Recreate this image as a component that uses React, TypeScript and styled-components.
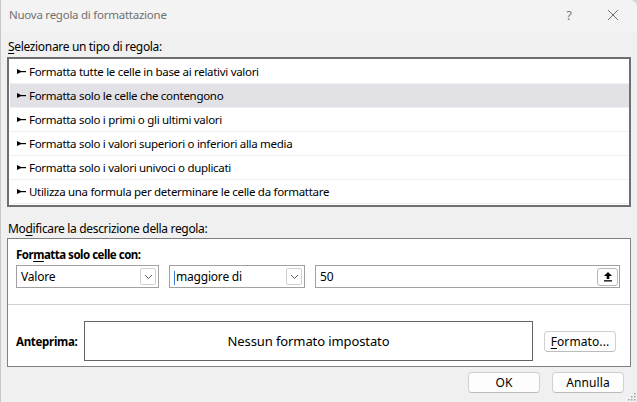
import styled, { createGlobalStyle } from 'styled-components';

const Global = createGlobalStyle`
	html, body {
		margin: 0;
		padding: 0;
		background: #d9d9d9;
	}
	body {
		font-family: 'Noto Sans', 'Open Sans', sans-serif;
		font-size: 12px;
		color: #000;
	}
`;

const Window = styled.div`
	width: 637px;
	height: 402px;
	box-sizing: border-box;
	background: #f0f0f0;
	border-left: 1px solid #c8c8c8;
	border-top-right-radius: 8px;
	display: flex;
	flex-direction: column;
	overflow: hidden;
`;

const TitleBar = styled.div`
	height: 32px;
	flex: none;
	box-sizing: border-box;
	background: #f3f3f3;
	display: flex;
	align-items: center;
	padding: 0 14px 3px 8px;
`;

const Title = styled.div`
	flex: 1;
	color: #707070;
	font-size: 11.5px;
	letter-spacing: -0.25px;
`;

const TitleButton = styled.div<{ $w: number }>`
	width: ${(p) => p.$w}px;
	text-align: center;
	color: #7a7a7a;
	font-size: 13px;
	display: flex;
	justify-content: center;
`;

const Body = styled.div`
	flex: 1;
	padding: 0 6px 0 6px;
	display: flex;
	flex-direction: column;
`;

const Label = styled.div<{ $top: number }>`
	margin-top: ${(p) => p.$top}px;
	height: 16px;
	line-height: 16px;
	padding-left: 1px;
	font-size: 12px;
	letter-spacing: -0.33px;
`;

const U = styled.span`
	text-decoration: underline;
	text-underline-offset: 2px;
`;

const List = styled.div`
	margin-top: 2px;
	height: 150px;
	box-sizing: border-box;
	border: 2px solid #6e6e73;
	background: #fff;
	padding-top: 1px;
	display: flex;
	flex-direction: column;
	overflow: hidden;
`;

const Row = styled.div<{ $selected?: boolean }>`
	height: 24px;
	flex: none;
	box-sizing: border-box;
	display: flex;
	align-items: center;
	gap: 3px;
	padding-left: 7px;
	margin-left: 1px;
	background: ${(p) => (p.$selected ? '#e1e1e6' : '#fff')};
	border-bottom: 1px solid #f0f0f0;
	font-size: 11.5px;
	letter-spacing: -0.3px;
`;

const Panel = styled.div`
	margin-top: 1px;
	height: 129px;
	box-sizing: border-box;
	border: 1px solid #808080;
	background: #fff;
	display: flex;
	flex-direction: column;
`;

const CondSection = styled.div`
	height: 66px;
	flex: none;
	box-sizing: border-box;
	border-bottom: 1px solid #d2d2d2;
	padding: 8px 10px 0 8px;
`;

const Bold = styled.div`
	font-weight: 700;
	font-size: 11.5px;
	height: 15px;
	line-height: 15px;
	letter-spacing: -0.5px;
`;

const CondRow = styled.div`
	display: flex;
	align-items: center;
	margin-top: 3px;
	gap: 10px;
`;

const Combo = styled.div<{ $w: number }>`
	width: ${(p) => p.$w}px;
	height: 23px;
	box-sizing: border-box;
	border: 1px solid #a0a0a0;
	background: #fff;
	display: flex;
	align-items: center;
	padding: 0 2px 0 4px;
	font-size: 12px;
	letter-spacing: -0.2px;
`;

const ComboText = styled.div`
	flex: 1;
`;

const Caret = styled.span`
	display: inline-block;
	width: 1px;
	height: 14px;
	background: #3a78d6;
	margin-right: 1px;
	vertical-align: middle;
`;

const DropButton = styled.div`
	width: 16px;
	height: 17px;
	box-sizing: border-box;
	border: 1px solid #d0d0d0;
	border-radius: 2px;
	display: flex;
	align-items: center;
	justify-content: center;
`;

const InputBox = styled(Combo)`
	flex: 1;
	width: auto;
	padding: 0 1px 0 4px;
`;

const RefButton = styled.div`
	width: 21px;
	height: 18px;
	box-sizing: border-box;
	border: 1px solid #b8b8b8;
	border-radius: 3px;
	background: #fdfdfd;
	display: flex;
	align-items: center;
	justify-content: center;
`;

const PreviewSection = styled.div`
	display: flex;
	align-items: center;
	padding: 16px 11px 0 8px;
`;

const PreviewLabel = styled(Bold)`
	width: 68px;
	letter-spacing: -0.3px;
`;

const PreviewBox = styled.div`
	width: 449px;
	height: 40px;
	box-sizing: border-box;
	border: 1px solid #646464;
	display: flex;
	align-items: center;
	justify-content: center;
	font-size: 13px;
	letter-spacing: -0.1px;
	margin-right: 11px;
`;

const Button = styled.div<{ $w: number }>`
	width: ${(p) => p.$w}px;
	height: 21px;
	box-sizing: border-box;
	border: 1px solid #d0d0d0;
	border-bottom-color: #bcbcbc;
	border-radius: 4px;
	background: #fdfdfd;
	display: flex;
	align-items: center;
	justify-content: center;
	font-size: 12px;
	letter-spacing: 0.1px;
`;

const Footer = styled.div`
	display: flex;
	justify-content: flex-end;
	gap: 12px;
	margin-top: 5px;
	padding-right: 7px;
`;

const Grip = styled.svg`
	position: absolute;
	right: 1px;
	bottom: 1px;
`;

const Bullet = () => (
	<svg width="9" height="7" viewBox="0 0 9 7">
		<polygon points="0,1 0,6 5,3.5" fill="#000" />
		<rect x="0" y="3" width="9" height="1.2" fill="#000" />
	</svg>
);

const Chevron = () => (
	<svg width="9" height="6" viewBox="0 0 9 6">
		<polyline points="1,1 4.5,4.5 8,1" fill="none" stroke="#606060" strokeWidth="1" />
	</svg>
);

const rules = [
	'Formatta tutte le celle in base ai relativi valori',
	'Formatta solo le celle che contengono',
	'Formatta solo i primi o gli ultimi valori',
	'Formatta solo i valori superiori o inferiori alla media',
	'Formatta solo i valori univoci o duplicati',
	'Utilizza una formula per determinare le celle da formattare',
];

export default function App() {
	return (
		<>
			<Global />
			<div style={{ position: 'relative', width: 637, height: 402 }}>
				<Window>
					<TitleBar>
						<Title>Nuova regola di formattazione</Title>
						<TitleButton $w={20}>?</TitleButton>
						<div style={{ width: 24 }} />
						<TitleButton $w={20}>
							<svg width="12" height="12" viewBox="0 0 12 12">
								<path d="M1 1 L11 11 M11 1 L1 11" stroke="#6e6e6e" strokeWidth="1" />
							</svg>
						</TitleButton>
					</TitleBar>
					<Body>
						<Label $top={7}>
							<U>S</U>elezionare un tipo di regola:
						</Label>
						<List>
							{rules.map((r, i) => (
								<Row key={r} $selected={i === 1}>
									<Bullet />
									{r}
								</Row>
							))}
						</List>
						<Label $top={14}>
							Mo<U>d</U>ificare la descrizione della regola:
						</Label>
						<Panel>
							<CondSection>
								<Bold>
									For<U>m</U>atta solo celle con:
								</Bold>
								<CondRow>
									<Combo $w={143}>
										<ComboText>Valore</ComboText>
										<DropButton>
											<Chevron />
										</DropButton>
									</Combo>
									<Combo $w={136}>
										<ComboText>
											<Caret />
											maggiore di
										</ComboText>
										<DropButton>
											<Chevron />
										</DropButton>
									</Combo>
									<InputBox $w={0}>
										<ComboText>50</ComboText>
										<RefButton>
											<svg width="10" height="11" viewBox="0 0 10 11">
												<polygon points="5,1 9,5 6.3,5 6.3,8 3.7,8 3.7,5 1,5" fill="#000" />
												<rect x="1" y="9.2" width="8" height="1.3" fill="#000" />
											</svg>
										</RefButton>
									</InputBox>
								</CondRow>
							</CondSection>
							<PreviewSection>
								<PreviewLabel>Anteprima:</PreviewLabel>
								<PreviewBox>Nessun formato impostato</PreviewBox>
								<Button $w={72}>
									<U>F</U>ormato...
								</Button>
							</PreviewSection>
						</Panel>
						<Footer>
							<Button $w={72}>OK</Button>
							<Button $w={72}>Annulla</Button>
						</Footer>
					</Body>
				</Window>
				<Grip width="10" height="10" viewBox="0 0 10 10">
					{[
						[8, 2],
						[8, 5],
						[5, 5],
						[8, 8],
						[5, 8],
						[2, 8],
					].map(([x, y]) => (
						<rect key={`${x}-${y}`} x={x} y={y} width="1.5" height="1.5" fill="#a0a0a0" />
					))}
				</Grip>
			</div>
		</>
	);
}
